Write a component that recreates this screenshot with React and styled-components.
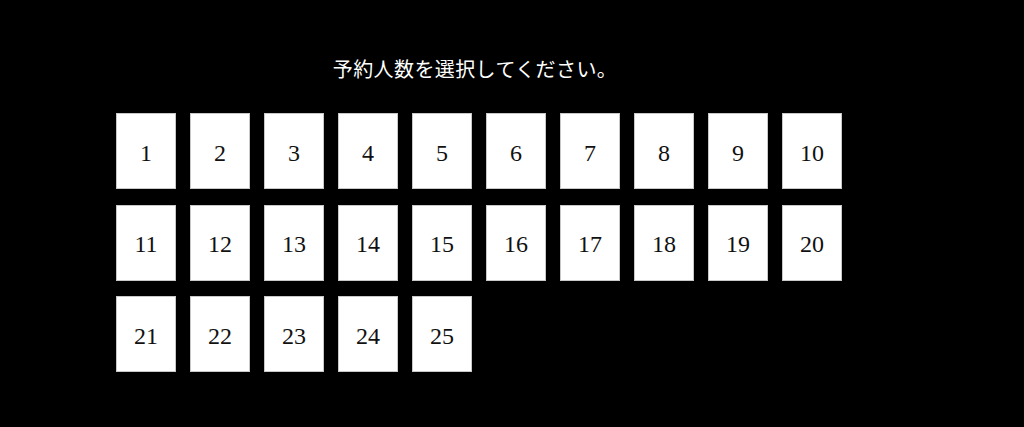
import styled, { createGlobalStyle } from "styled-components"

const GlobalStyle = createGlobalStyle`
  body {
    margin: 0;
    background: #000;
  }
`

const Page = styled.div`
  min-height: 427px;
  background: #000;
  padding: 55px 0 0 116px;
  box-sizing: border-box;
`

const Panel = styled.div`
  width: 726px;
`

const Title = styled.h1`
  margin: 0;
  padding-right: 8px;
  font-family: "Noto Sans CJK JP", "Noto Sans", sans-serif;
  font-size: 20px;
  font-weight: 400;
  letter-spacing: 0.4px;
  line-height: 28px;
  color: #fff;
  text-align: center;
`

const Grid = styled.div`
  margin-top: 30px;
  display: grid;
  grid-template-columns: repeat(10, 60px);
  column-gap: 14px;
  row-gap: 15.5px;
`

const CountButton = styled.button`
  width: 60px;
  height: 76px;
  padding: 4px 0 0;
  background: #fff;
  border: 1px solid #c8c8c8;
  border-radius: 0;
  font-family: "Liberation Serif", "Times New Roman", serif;
  font-size: 24px;
  color: #111;
  cursor: pointer;

  :focus {
    outline: none;
  }
`

const counts = Array.from({ length: 25 }, (_, i) => i + 1)

const App = () => {
  return (
    <>
      <GlobalStyle />
      <Page>
        <Panel>
          <Title>予約人数を選択してください。</Title>
          <Grid>
            {counts.map((n) => (
              <CountButton key={n}>{n}</CountButton>
            ))}
          </Grid>
        </Panel>
      </Page>
    </>
  )
}

export default App
